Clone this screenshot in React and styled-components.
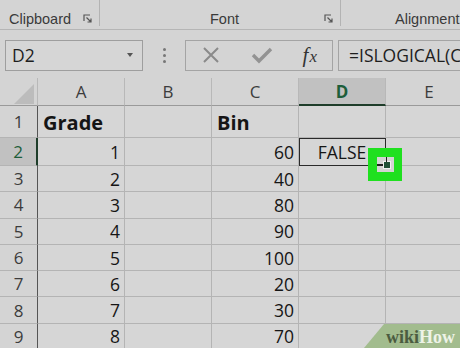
import React from 'react'
import styled, { createGlobalStyle } from 'styled-components'

const Global = createGlobalStyle`
  html, body { margin: 0; padding: 0; }
  body {
    background: #d4d4d4;
    font-family: "Open Sans", "Noto Sans", sans-serif;
    overflow: hidden;
  }
`

const cols = ['A', 'B', 'C', 'D', 'E']
const rows = [
  { n: 1, a: 'Grade', c: 'Bin', bold: true, h: 32 },
  { n: 2, a: '1', c: '60', d: 'FALSE', h: 28 },
  { n: 3, a: '2', c: '40', h: 26.3 },
  { n: 4, a: '3', c: '80', h: 26.3 },
  { n: 5, a: '4', c: '90', h: 26.3 },
  { n: 6, a: '5', c: '100', h: 26.3 },
  { n: 7, a: '6', c: '20', h: 26.3 },
  { n: 8, a: '7', c: '30', h: 26.3 },
  { n: 9, a: '8', c: '70', h: 26.3 },
]

function Launcher() {
  return (
    <LauncherBox>
      <svg width="10" height="10" viewBox="0 0 10 10">
        <path d="M1 7V1h6" fill="none" stroke="#555" strokeWidth="1.2" />
        <path d="M3.5 3.5L8 8M8 4.5V8H4.5" fill="none" stroke="#555" strokeWidth="1.2" />
      </svg>
    </LauncherBox>
  )
}

function App() {
  return (
    <Page>
      <Global />
      <Ribbon>
        <Group width={100}>
          <GroupLabel>Clipboard</GroupLabel>
          <Launcher />
        </Group>
        <Group width={241} center>
          <GroupLabel>Font</GroupLabel>
          <Launcher />
        </Group>
        <Group width={140} pad={54} last>
          <GroupLabel>Alignment</GroupLabel>
        </Group>
      </Ribbon>

      <FormulaBar>
        <NameBox>
          <span>D2</span>
          <Caret />
        </NameBox>
        <Dots>
          <i /><i /><i />
        </Dots>
        <ButtonBox>
          <svg width="20" height="20" viewBox="0 0 20 20">
            <path d="M3 3L17 17M17 3L3 17" stroke="#8a8a8a" strokeWidth="2" />
          </svg>
          <svg width="24" height="20" viewBox="0 0 24 20">
            <path d="M3 10L9 16L21 4" fill="none" stroke="#939393" strokeWidth="3.4" />
          </svg>
          <Fx>f<span>x</span></Fx>
        </ButtonBox>
        <FormulaInput>=ISLOGICAL(C2)</FormulaInput>
      </FormulaBar>

      <Sheet>
        <Corner>
          <Triangle />
        </Corner>
        {cols.map((c) => (
          <ColHead key={c} active={c === 'D'}>{c}</ColHead>
        ))}
        {rows.map((r) => (
          <React.Fragment key={r.n}>
            <RowHead active={r.n === 2} h={r.h}>{r.n}</RowHead>
            <Cell bold={r.bold} right={!r.bold}>{r.a}</Cell>
            <Cell />
            <Cell bold={r.bold} right={!r.bold}>{r.c}</Cell>
            <Cell center selected={r.n === 2}>
              {r.d}
              {r.n === 2 && (
                <HandleGlow>
                  <HandleInner>
                    <HandleSquare />
                  </HandleInner>
                </HandleGlow>
              )}
            </Cell>
            <Cell />
          </React.Fragment>
        ))}
      </Sheet>

      <Watermark>
        <Wiki>wiki</Wiki><How>How</How>
      </Watermark>
    </Page>
  )
}

const Page = styled.div`
  position: relative;
  width: 460px;
  height: 348px;
  overflow: hidden;
  background: #d4d4d4;
`

const Ribbon = styled.div`
  display: flex;
  height: 30px;
  border-bottom: 1px solid #b5b5b5;
  box-sizing: border-box;
`

const Group = styled.div`
  position: relative;
  flex: 0 0 ${(p) => p.width}px;
  display: flex;
  align-items: flex-end;
  justify-content: ${(p) => (p.center ? 'center' : 'flex-start')};
  padding: 0 0 0 ${(p) => p.pad || 9}px;
  box-sizing: border-box;
  border-right: ${(p) => (p.last ? 'none' : '1px solid #b3b3b3')};
  margin-bottom: 3px;
`

const GroupLabel = styled.div`
  font-family: "Liberation Sans", Arial, sans-serif;
  font-size: 14.5px;
  color: #3a3a3a;
  line-height: 20px;
  margin-bottom: -3px;
`

const LauncherBox = styled.div`
  position: absolute;
  right: 6px;
  bottom: 2px;
  line-height: 0;
`

const FormulaBar = styled.div`
  display: flex;
  align-items: center;
  height: 41px;
  padding: 9px 0 0 5px;
  box-sizing: border-box;
`

const NameBox = styled.div`
  width: 138px;
  height: 31px;
  box-sizing: border-box;
  border: 1px solid #9e9e9e;
  background: #d6d6d6;
  display: flex;
  align-items: center;
  justify-content: space-between;
  padding: 0 9px 0 6px;
  font-size: 17.5px;
  color: #1e1e1e;
`

const Caret = styled.div`
  width: 0;
  height: 0;
  border-left: 3.5px solid transparent;
  border-right: 3.5px solid transparent;
  border-top: 4px solid #555;
`

const Dots = styled.div`
  width: 42px;
  display: flex;
  flex-direction: column;
  align-items: center;
  gap: 3px;
  i {
    display: block;
    width: 3px;
    height: 3px;
    border-radius: 50%;
    background: #777;
  }
`

const ButtonBox = styled.div`
  width: 148px;
  height: 31px;
  box-sizing: border-box;
  border: 1px solid #a4a4a4;
  display: flex;
  align-items: center;
  justify-content: space-between;
  padding: 0 15px 0 15px;
`

const Fx = styled.span`
  font-family: "Liberation Serif", serif;
  font-style: italic;
  font-size: 21px;
  color: #333;
  span {
    font-size: 17px;
    margin-left: 1px;
  }
`

const FormulaInput = styled.div`
  margin-left: 5px;
  flex: 1;
  height: 31px;
  box-sizing: border-box;
  border: 1px solid #a4a4a4;
  border-right: none;
  display: flex;
  align-items: center;
  padding-left: 10px;
  font-size: 17.5px;
  color: #1e1e1e;
  white-space: nowrap;
  overflow: hidden;
`

const Sheet = styled.div`
  display: grid;
  grid-template-columns: 38px 87px 87px 87px 87px 87px;
  margin-top: 7px;
`

const Corner = styled.div`
  position: relative;
  height: 28px;
  border-right: 1px solid #b8b8b8;
  border-bottom: 1px solid #9a9a9a;
  box-sizing: border-box;
`

const Triangle = styled.div`
  position: absolute;
  right: 3px;
  bottom: 1px;
  width: 0;
  height: 0;
  border-left: 20px solid transparent;
  border-bottom: 20px solid #bcbcbc;
`

const ColHead = styled.div`
  height: 28px;
  box-sizing: border-box;
  display: flex;
  align-items: center;
  justify-content: center;
  font-size: 17px;
  color: ${(p) => (p.active ? '#1d5e3a' : '#3c3c3c')};
  font-weight: ${(p) => (p.active ? 700 : 400)};
  background: ${(p) => (p.active ? '#c1c1c1' : '#d4d4d4')};
  border-right: 1px solid #b8b8b8;
  border-bottom: ${(p) => (p.active ? '2px solid #1e3d2a' : '1px solid #9a9a9a')};
`

const RowHead = styled.div`
  height: ${(p) => p.h}px;
  box-sizing: border-box;
  display: flex;
  align-items: center;
  justify-content: center;
  font-size: 17px;
  color: ${(p) => (p.active ? '#1d5e3a' : '#3c3c3c')};
  background: ${(p) => (p.active ? '#c1c1c1' : '#d4d4d4')};
  border-right: ${(p) => (p.active ? '2px solid #1e3d2a' : '1px solid #555')};
  border-bottom: 1px solid #b4b4b4;
`

const Cell = styled.div`
  position: relative;
  box-sizing: border-box;
  display: flex;
  align-items: center;
  justify-content: ${(p) => (p.right ? 'flex-end' : p.center ? 'center' : 'flex-start')};
  padding: ${(p) => (p.bold ? '2px 0 0 5px' : '0 4px 0 4px')};
  font-size: ${(p) => (p.bold ? '20px' : '17.5px')};
  font-weight: ${(p) => (p.bold ? 700 : 400)};
  color: #151515;
  background: #d6d6d6;
  border-right: 1px solid #b4b4b4;
  border-bottom: 1px solid #b4b4b4;
  ${(p) => p.selected && `
    outline: 1.5px solid #2a2a2a;
    outline-offset: -1px;
    z-index: 2;
  `}
`

const HandleGlow = styled.div`
  position: absolute;
  left: 69px;
  top: 10px;
  width: 34px;
  height: 33px;
  background: #1fe01f;
  display: flex;
  align-items: center;
  justify-content: center;
  z-index: 3;
`

const HandleInner = styled.div`
  position: relative;
  width: 17px;
  height: 15px;
  background: #d3d3d3;
  &::before {
    content: '';
    position: absolute;
    left: 0;
    top: 7px;
    width: 7px;
    height: 1.5px;
    background: #222;
  }
  &::after {
    content: '';
    position: absolute;
    left: 9px;
    top: 0;
    width: 1.5px;
    height: 5px;
    background: #222;
  }
`

const HandleSquare = styled.div`
  position: absolute;
  left: 6px;
  top: 4px;
  width: 6px;
  height: 6px;
  background: #1f4f36;
  border: 1px solid #f0f0f0;
`

const Watermark = styled.div`
  position: absolute;
  right: 0;
  bottom: 0;
  width: 96px;
  height: 24px;
  background: #a2bc8e;
  clip-path: polygon(20px 0, 100% 0, 100% 100%, 0 100%);
  display: flex;
  align-items: center;
  justify-content: flex-end;
  padding: 2px 5px 0 0;
  box-sizing: border-box;
  font-family: "Liberation Serif", serif;
  font-weight: 700;
  font-size: 18px;
`

const Wiki = styled.span`
  color: #4b5b40;
`

const How = styled.span`
  color: #eef3e8;
`

export default App
